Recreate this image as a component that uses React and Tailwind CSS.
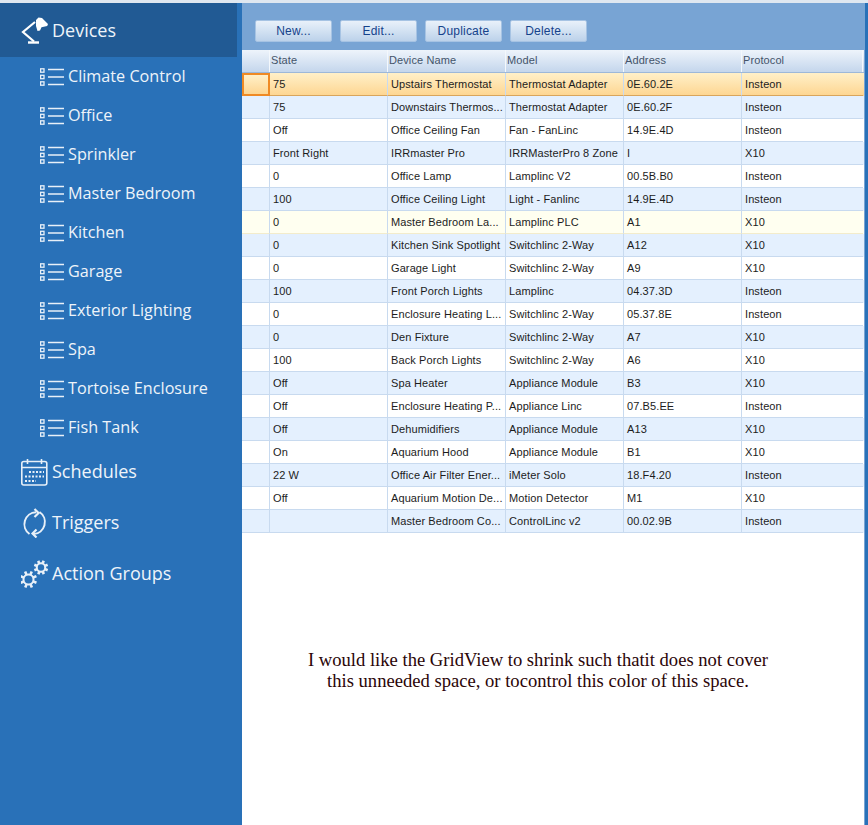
import React from "react";

const rows = [
  ["75","Upstairs Thermostat","Thermostat Adapter","0E.60.2E","Insteon"],
  ["75","Downstairs Thermos...","Thermostat Adapter","0E.60.2F","Insteon"],
  ["Off","Office Ceiling Fan","Fan - FanLinc","14.9E.4D","Insteon"],
  ["Front Right","IRRmaster Pro","IRRMasterPro 8 Zone","I","X10"],
  ["0","Office Lamp","Lamplinc V2","00.5B.B0","Insteon"],
  ["100","Office Ceiling Light","Light - Fanlinc","14.9E.4D","Insteon"],
  ["0","Master Bedroom La...","Lamplinc PLC","A1","X10"],
  ["0","Kitchen Sink Spotlight","Switchlinc 2-Way","A12","X10"],
  ["0","Garage Light","Switchlinc 2-Way","A9","X10"],
  ["100","Front Porch Lights","Lamplinc","04.37.3D","Insteon"],
  ["0","Enclosure Heating L...","Switchlinc 2-Way","05.37.8E","Insteon"],
  ["0","Den Fixture","Switchlinc 2-Way","A7","X10"],
  ["100","Back Porch Lights","Switchlinc 2-Way","A6","X10"],
  ["Off","Spa Heater","Appliance Module","B3","X10"],
  ["Off","Enclosure Heating P...","Appliance Linc","07.B5.EE","Insteon"],
  ["Off","Dehumidifiers","Appliance Module","A13","X10"],
  ["On","Aquarium Hood","Appliance Module","B1","X10"],
  ["22 W","Office Air Filter Ener...","iMeter Solo","18.F4.20","Insteon"],
  ["Off","Aquarium Motion De...","Motion Detector","M1","X10"],
  ["","Master Bedroom Co...","ControlLinc v2","00.02.9B","Insteon"],
];
const groups = ["Climate Control","Office","Sprinkler","Master Bedroom","Kitchen","Garage","Exterior Lighting","Spa","Tortoise Enclosure","Fish Tank"];
const cols = "grid grid-cols-[28px_118px_118px_118px_118px_121px]";

function ListIcon() {
  return (
    <svg width="24" height="18" viewBox="0 0 24 18" className="shrink-0" fill="none" stroke="#e8f0f8">
      <rect x="0.6" y="0.8" width="3.4" height="3.4" strokeWidth="1.3" />
      <rect x="0.6" y="7.3" width="3.4" height="3.4" strokeWidth="1.3" />
      <rect x="0.6" y="13.8" width="3.4" height="3.4" strokeWidth="1.3" />
      <path d="M8 1.5h16M8 9h16M8 16.5h16" strokeWidth="1.5" />
    </svg>
  );
}
function Lamp() {
  return (
    <svg width="30" height="30" viewBox="0 0 30 30" fill="none" stroke="#fff">
      <path d="M14 7 2 17l11 9.5" strokeWidth="2.2" />
      <path d="M7 27.5h11" strokeWidth="2.4" />
      <path d="M15 5l2.5-2.5 3.5.5 6 6-.8 2-5.7 1.2-1.5 3.3-2.5.5-1.5-5z" fill="#fff" stroke="none" />
    </svg>
  );
}
function Calendar() {
  return (
    <svg width="27" height="28" viewBox="0 0 27 28" fill="none" stroke="#e8f0f8">
      <rect x="0.8" y="3.5" width="25" height="23.5" rx="2" strokeWidth="1.6" />
      <path d="M1 9.5h25M6.5 1v5M20.5 1v5" strokeWidth="1.6" />
      <path d="M8 14h15M4 18.5h19M4 23h11" strokeWidth="2" strokeDasharray="2 1.5" />
    </svg>
  );
}
function Cycle() {
  return (
    <svg width="28" height="30" viewBox="0 0 28 30" fill="none" stroke="#e8f0f8" strokeWidth="2">
      <path d="M8.5 26A12 12 0 0 1 15 4.2" />
      <path d="M18.5 4A12 12 0 0 1 12.5 26" />
      <path d="M13.5 1l4 4-4 4" strokeWidth="2.2" />
      <path d="M15.5 21.5l-4 4 4 4" strokeWidth="2.2" />
    </svg>
  );
}
function Gear({ x, y, r, o }) {
  const teeth = [0,45,90,135,180,225,270,315].map((a) => {
    const t = ((a + 22) * Math.PI) / 180;
    return `M${x + Math.cos(t) * r} ${y + Math.sin(t) * r}L${x + Math.cos(t) * o} ${y + Math.sin(t) * o}`;
  }).join("");
  return (
    <g stroke="#e8f0f8" fill="none">
      <circle cx={x} cy={y} r={r} strokeWidth="2" />
      <path d={teeth} strokeWidth="2.6" />
    </g>
  );
}
function Gears() {
  return (
    <svg width="30" height="30" viewBox="0 0 30 30">
      <Gear x={7.5} y={20.5} r={5} o={8.6} />
      <Gear x={20} y={8.5} r={4.2} o={7.2} />
    </svg>
  );
}

function Top({ icon, label }) {
  return (
    <div className="h-[51px] flex items-center pl-[21px] gap-[1px] text-[18px] text-[#eef4fa]">
      <span className="w-[30px] flex justify-start">{icon}</span>
      <span>{label}</span>
    </div>
  );
}

function Row({ r, i }) {
  const selected = i === 0;
  const cream = i === 6;
  const bg = selected
    ? "bg-gradient-to-b from-[#fff0c8] to-[#fdd590]"
    : cream
    ? "bg-[#fffff0]"
    : i % 2 === 1
    ? "bg-[#e4f0fe]"
    : "bg-white";
  const line = selected ? "border-b-[#d8a55c]" : cream ? "border-b-[#f3eccb]" : "border-b-[#c8daef]";
  const cell = `h-[23px] border-r border-r-[#c8daef] border-b ${line} flex items-center overflow-hidden whitespace-nowrap`;
  return (
    <div className={`${cols} ${bg} text-[11px] tracking-[0.1px] text-[#1c1c1c]`}>
      {selected ? (
        <div className="h-[23px] border-2 border-[#ef8a24] bg-gradient-to-b from-[#fff0c8] to-[#fdd590]" />
      ) : (
        <div className={cell} />
      )}
      <div className={`${cell} pl-[3px]`}>{r[0]}</div>
      <div className={`${cell} pl-[3px]`}>{r[1]}</div>
      <div className={`${cell} pl-[3px]`}>{r[2]}</div>
      <div className={`${cell} pl-[3px]`}>{r[3]}</div>
      <div className={`${cell} pl-[3px] border-r-0`}>{r[4]}</div>
    </div>
  );
}

export default function App() {
  return (
    <div className="w-[868px] h-[825px] flex flex-col overflow-hidden bg-white font-['Liberation_Sans',sans-serif]">
      <div className="h-[3px] bg-[#dfe7f0]" />
      <div className="flex-1 flex min-h-0">
        <aside className="w-[242px] shrink-0 bg-[#2971b8] font-['Open_Sans',sans-serif]">
          <div className="h-[54px] mr-[5px] bg-[#215a94] flex items-center pl-[21px] gap-[1px] text-[18px] text-[#eef4fa]">
            <span className="w-[30px]"><Lamp /></span>
            <span>Devices</span>
          </div>
          <div>
            {groups.map((g) => (
              <div key={g} className="h-[39px] flex items-center pl-[40px] gap-[4px] text-[16.2px] text-[#eef4fa]">
                <ListIcon />
                <span>{g}</span>
              </div>
            ))}
          </div>
          <div className="-mt-[1px]">
            <Top icon={<Calendar />} label="Schedules" />
            <Top icon={<Cycle />} label="Triggers" />
            <Top icon={<Gears />} label="Action Groups" />
          </div>
        </aside>
        <main className="flex-1 flex flex-col min-w-0">
          <div className="h-[47px] shrink-0 bg-[#78a4d4] flex items-start gap-[8px] pt-[17px] pl-[13px]">
            {["New...","Edit...","Duplicate","Delete..."].map((b) => (
              <button key={b} className="w-[77px] h-[22px] rounded-[2px] border border-[#a6c3e3] bg-gradient-to-b from-[#e9f1fa] to-[#bcd2ea] text-[12px] tracking-[0.2px] text-[#15428b]">
                {b}
              </button>
            ))}
          </div>
          <div>
            <div className={`${cols} h-[23px] bg-gradient-to-b from-[#eef4fb] to-[#c4d6ec] border-b border-b-[#9db8d8] text-[11px] tracking-[0.1px] text-[#44546a]`}>
              {["","State","Device Name","Model","Address","Protocol"].map((h, i) => (
                <div key={i} className="border-r border-r-[#f4f8fc] pl-[1px] pb-[2px] flex items-center whitespace-nowrap">{h}</div>
              ))}
            </div>
            {rows.map((r, i) => <Row key={i} r={r} i={i} />)}
          </div>
          <div className="mt-[116px] pr-[30px] text-center font-['Liberation_Serif',serif] text-[18.6px] leading-[21px] text-[#2b0508]">
            <p>I would like the GridView to shrink such thatit does not cover</p>
            <p>this unneeded space, or tocontrol this color of this space.</p>
          </div>
        </main>
        <div className="w-[4px] shrink-0 border-l border-l-[#78a4d4] bg-[#2971b8]" />
      </div>
    </div>
  );
}
